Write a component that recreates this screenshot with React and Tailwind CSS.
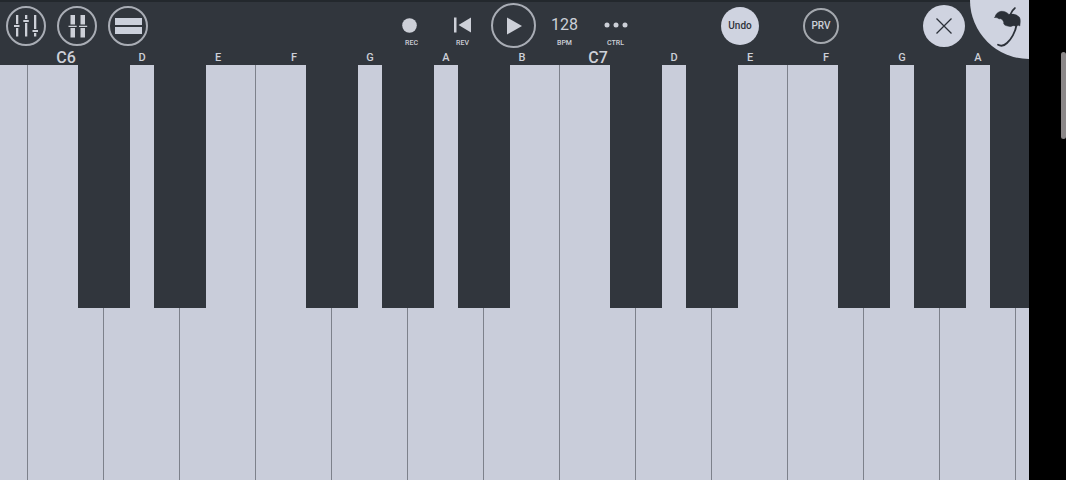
import React from 'react';

const WHITE_KEYS = [
  { id: 'b5' },
  { id: 'c6', label: 'C6', octave: true, sharp: true },
  { id: 'd6', label: 'D', sharp: true },
  { id: 'e6', label: 'E' },
  { id: 'f6', label: 'F', sharp: true },
  { id: 'g6', label: 'G', sharp: true },
  { id: 'a6', label: 'A', sharp: true },
  { id: 'b6', label: 'B' },
  { id: 'c7', label: 'C7', octave: true, sharp: true },
  { id: 'd7', label: 'D', sharp: true },
  { id: 'e7', label: 'E' },
  { id: 'f7', label: 'F', sharp: true },
  { id: 'g7', label: 'G', sharp: true },
  { id: 'a7', label: 'A', sharp: true },
  { id: 'b7' }
];

// First and last keys are cut off by the screen edge
const KEY_GRID = 'grid grid-cols-[28fr_repeat(13,76fr)_13fr]';

function RoundButton({ label, children }) {
  return (
    <button aria-label={label} className="flex size-10 items-center justify-center rounded-full border-2 border-[#a9adb5]">
      {children}
    </button>
  );
}

function TransportButton({ label, children }) {
  return (
    <button className="flex w-[51px] flex-col items-center self-stretch pt-[9px]">
      <span className="flex h-7 items-center justify-center">{children}</span>
      <span className="text-[7px] leading-[8px] font-medium">{label}</span>
    </button>
  );
}

function FruitLogo() {
  return (
    <svg viewBox="0 0 59 59" className="size-full" fill="none" stroke="#2b3038" strokeLinecap="round">
      <path d="M45 8 C43 9.5 41.5 11.5 40 15" strokeWidth="1.6" />
      <path
        d="M24.800 17.500 C25.500 14 28 11.800 31 11.300 C34.500 11 37 12.500 39 14.500 C42 13.500 47 14.500 49.200 17 C50.700 19 50.300 22 49.800 26 C48.500 25 47.500 25 46.500 26.500 C44.500 25.200 42.500 25.500 41 26.500 C38.500 26.500 34.500 25.500 33.800 24 C34 22 33 20.500 32 19.500 C31 18.500 30.500 18.500 29 19 C28 17.800 26.500 17.500 24.800 17.500 Z"
        fill="#2b3038"
        strokeWidth="0.500"
      />
      <path d="M46.500 25 C45.500 32 41 39.500 37 43 C34 46 31 46.500 28 44.800" strokeWidth="1.8" />
    </svg>
  );
}

function Toolbar() {
  return (
    <header className="relative flex h-[50px] items-center border-t-2 border-[#23282d] pr-16 pb-px pl-1.5 text-[#cdd0d8]">
      <div className="flex gap-[11px]">
        <RoundButton label="Mixer">
          <svg viewBox="0 0 24 24" className="size-6" fill="currentColor">
            <path d="M2 1h2.300v9H2zM2 14h2.300v8.500H2zM0 11h5.500v2H0zM11 1h2.300v4H11zM11 9h2.300v13.500H11zM9.300 6h5.500v2H9.300zM20 1h2.300v14H20zM20 19h2.300v3.500H20zM18.500 16H24v2h-5.500z" />
          </svg>
        </RoundButton>
        <RoundButton label="Channels">
          <svg viewBox="0 0 24 24" className="size-6" fill="currentColor">
            <path d="M5.500 1H10v9.500H5.500zM5.500 14H10v9.500H5.500zM15.500 1H20v9.500h-4.500zM15.500 14H20v9.500h-4.500zM3.500 11.700h8.200v1.300H3.500zM14 11.700h8.200v1.300H14z" />
          </svg>
        </RoundButton>
        <RoundButton label="Playlist">
          <span className="flex w-[27px] flex-col gap-0.5">
            <span className="h-[7px] shrink-0 bg-[#cbd0db]" />
            <span className="h-[7px] shrink-0 bg-[#cbd0db]" />
          </span>
        </RoundButton>
      </div>

      {/* Transport */}
      <div className="ml-auto flex items-center self-stretch">
        <TransportButton label="REC">
          <svg viewBox="0 0 19 15" className="h-[15px]" fill="currentColor">
            <circle cx="7.500" cy="7.500" r="7.300" />
          </svg>
        </TransportButton>
        <TransportButton label="REV">
          <svg viewBox="0 0 18 16" className="h-4" fill="currentColor">
            <path d="M0 0.500h2.500v15H0zM17 0.500v15L4.500 8z" />
          </svg>
        </TransportButton>
        <div className="flex w-[51px] justify-center">
          <button aria-label="Play" className="flex size-[45px] items-center justify-center rounded-full border-2 border-[#a9adb5]">
            <svg viewBox="0 0 16 18" className="h-[18px]" fill="currentColor">
              <path d="M1 0.500v17L16 9z" />
            </svg>
          </button>
        </div>
        <TransportButton label="BPM">
          <span className="text-base leading-none">128</span>
        </TransportButton>
        <TransportButton label="CTRL">
          <svg viewBox="0 0 24 6" className="h-1.5" fill="currentColor">
            <circle cx="3" cy="3" r="2.500" />
            <circle cx="12" cy="3" r="2.500" />
            <circle cx="21" cy="3" r="2.500" />
          </svg>
        </TransportButton>
      </div>

      <button className="ml-20 size-[38px] rounded-full bg-[#cfd3e0] text-[10px] font-medium text-[#2f343c]">Undo</button>
      <button className="ml-[44px] size-9 rounded-full border-2 border-[#a4a8ae] text-[10px] font-medium">PRV</button>
      <button aria-label="Close" className="ml-[84px] flex size-[42px] items-center justify-center rounded-full bg-[#cfd3e0]">
        <svg viewBox="0 0 16 16" className="size-4" stroke="#2b3038" strokeWidth="1.300">
          <path d="M0.500 0.500l15 15M15.500 0.500l-15 15" />
        </svg>
      </button>

      <button aria-label="Menu" className="absolute -top-0.5 right-0 z-10 size-[59px] rounded-bl-full bg-[#cfd3e0]">
        <FruitLogo />
      </button>
    </header>
  );
}

function Keyboard() {
  return (
    <main className="flex flex-1 flex-col">
      <div className={`${KEY_GRID} text-center text-[#cdd0d8]`}>
        {WHITE_KEYS.map(key => (
          <span key={key.id} className={key.octave ? 'text-base leading-[15px] font-medium' : 'text-[11px] leading-[15px] font-medium'}>
            {key.label}
          </span>
        ))}
      </div>
      <div className={`${KEY_GRID} flex-1`}>
        {WHITE_KEYS.map(key => (
          <div key={key.id} className="group relative">
            <button aria-label={key.id} className="size-full border-r border-[#7d818b] bg-[#c9cdda] group-last:border-r-0" />
            {key.sharp && (
              <button
                aria-label={`${key.id} sharp`}
                className="absolute top-0 right-0 z-10 h-[243px] w-[52px] translate-x-1/2 bg-[#31363d]"
              />
            )}
          </div>
        ))}
      </div>
    </main>
  );
}

export default function App() {
  return (
    <div className="flex min-h-screen bg-black font-['Roboto',sans-serif]">
      <div className="flex min-w-0 flex-1 flex-col overflow-hidden bg-[#31363d]">
        <Toolbar />
        <Keyboard />
      </div>
      <aside className="flex w-[37px] justify-end pt-[52px]">
        <div className="h-[87px] w-[5px] rounded-full bg-[#8b8788]" />
      </aside>
    </div>
  );
}
